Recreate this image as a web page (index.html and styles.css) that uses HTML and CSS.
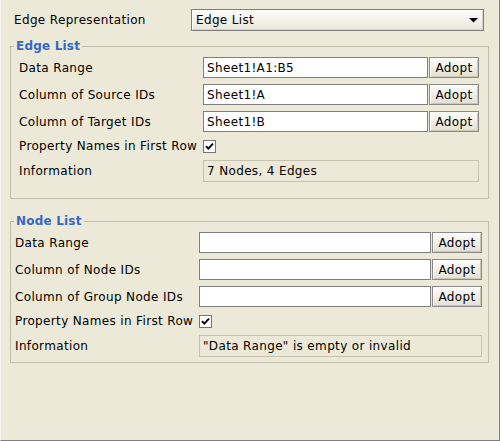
FILE: index.html
```html
<!DOCTYPE html>
<html>
<head>
<meta charset="utf-8">
<link rel="stylesheet" href="styles.css">
</head>
<body>
<div class="panel">
  <div class="top-row">
    <span class="top-label">Edge Representation</span>
    <div class="select">
      <span>Edge List</span>
      <svg class="arrow" width="9" height="5" viewBox="0 0 9 5"><polygon points="0,0 9,0 4.5,4.6" fill="#000"/></svg>
    </div>
  </div>

  <fieldset class="group edge">
    <legend>Edge List</legend>
    <div class="grid">
      <span class="label">Data Range</span>
      <div class="input">Sheet1!A1:B5</div>
      <div class="btn">Adopt</div>

      <span class="label">Column of Source IDs</span>
      <div class="input">Sheet1!A</div>
      <div class="btn">Adopt</div>

      <span class="label">Column of Target IDs</span>
      <div class="input">Sheet1!B</div>
      <div class="btn">Adopt</div>

      <span class="label">Property Names in First Row</span>
      <div class="check-cell"><span class="check"><svg width="11" height="11" viewBox="0 0 11 11"><path d="M2 5.2 L4.3 7.6 L9 2.6" fill="none" stroke="#000" stroke-width="1.9"/></svg></span></div>

      <span class="label">Information</span>
      <div class="info">7 Nodes, 4 Edges</div>
    </div>
  </fieldset>

  <fieldset class="group node">
    <legend>Node List</legend>
    <div class="grid">
      <span class="label">Data Range</span>
      <div class="input"></div>
      <div class="btn">Adopt</div>

      <span class="label">Column of Node IDs</span>
      <div class="input"></div>
      <div class="btn">Adopt</div>

      <span class="label">Column of Group Node IDs</span>
      <div class="input"></div>
      <div class="btn">Adopt</div>

      <span class="label">Property Names in First Row</span>
      <div class="check-cell"><span class="check"><svg width="11" height="11" viewBox="0 0 11 11"><path d="M2 5.2 L4.3 7.6 L9 2.6" fill="none" stroke="#000" stroke-width="1.9"/></svg></span></div>

      <span class="label">Information</span>
      <div class="info">"Data Range" is empty or invalid</div>
    </div>
  </fieldset>
</div>
</body>
</html>
```

FILE: styles.css
```css
* {
  box-sizing: border-box;
}

html, body {
  margin: 0;
  padding: 0;
  background: #ece9d8;
}

body {
  font-family: "DejaVu Sans", "Liberation Sans", sans-serif;
  font-size: 12px;
  letter-spacing: 0.35px;
  color: #000;
}

.panel {
  width: 500px;
  height: 441px;
  background: #ece9d8;
  border-left: 1px solid #f6f5ef;
  border-right: 1px solid #7f7f7f;
  border-bottom: 1px solid #7f7f7f;
  padding: 9px 0 0 9px;
}

.top-row {
  display: flex;
  align-items: center;
  height: 22px;
}

.top-label {
  width: 181px;
  padding-left: 4px;
  white-space: nowrap;
}

.select {
  width: 293px;
  height: 22px;
  display: flex;
  align-items: center;
  padding: 0 3px 0 4px;
  border: 1px solid #7f7f7f;
  background: linear-gradient(#fdfdfb, #ebe8db);
  box-shadow: inset 1px 1px 0 #ffffff, inset -1px -1px 0 #d6d2c2;
}

.arrow {
  margin-left: auto;
  margin-right: 2px;
  margin-top: 1px;
}

.group {
  width: 479px;
  margin: 0;
  border: 1px solid #bfbdab;
  min-width: 0;
}

.group legend {
  font-weight: bold;
  color: #3568c6;
  line-height: 15px;
  letter-spacing: 0.2px;
  padding: 0 2px;
}

.edge {
  margin-top: 8px;
  padding: 3px 9px 16px 8px;
}

.edge legend {
  margin-left: -5px;
}

.node {
  margin-top: 15px;
  padding: 3px 6px 5px 4px;
}

.node legend {
  margin-left: -1px;
}

.grid {
  display: grid;
  grid-template-columns: 183px 1fr 50px;
  grid-template-rows: 21px 21px 21px 16px 22px;
  column-gap: 1px;
  row-gap: 6px;
}

.label {
  align-self: center;
  white-space: nowrap;
}

.input {
  border: 1px solid #7f7f7f;
  background: #fff;
  padding: 0 3px;
  display: flex;
  align-items: center;
  white-space: nowrap;
}

.btn {
  border: 1px solid #8a8a8a;
  background: linear-gradient(#fdfdfb, #e4e0d1);
  box-shadow: inset 1px 1px 0 #ffffff, inset -1px -1px 0 #cbc7b6;
  display: flex;
  align-items: center;
  justify-content: center;
}

.check-cell {
  grid-column: 2 / 4;
  display: flex;
  align-items: center;
}

.check {
  width: 13px;
  height: 13px;
  border: 1px solid #767676;
  background: #fff;
  display: flex;
  align-items: center;
  justify-content: center;
}

.info {
  grid-column: 2 / 4;
  border: 1px solid #c4c1b0;
  padding: 0 3px;
  display: flex;
  align-items: center;
  white-space: nowrap;
}
```
